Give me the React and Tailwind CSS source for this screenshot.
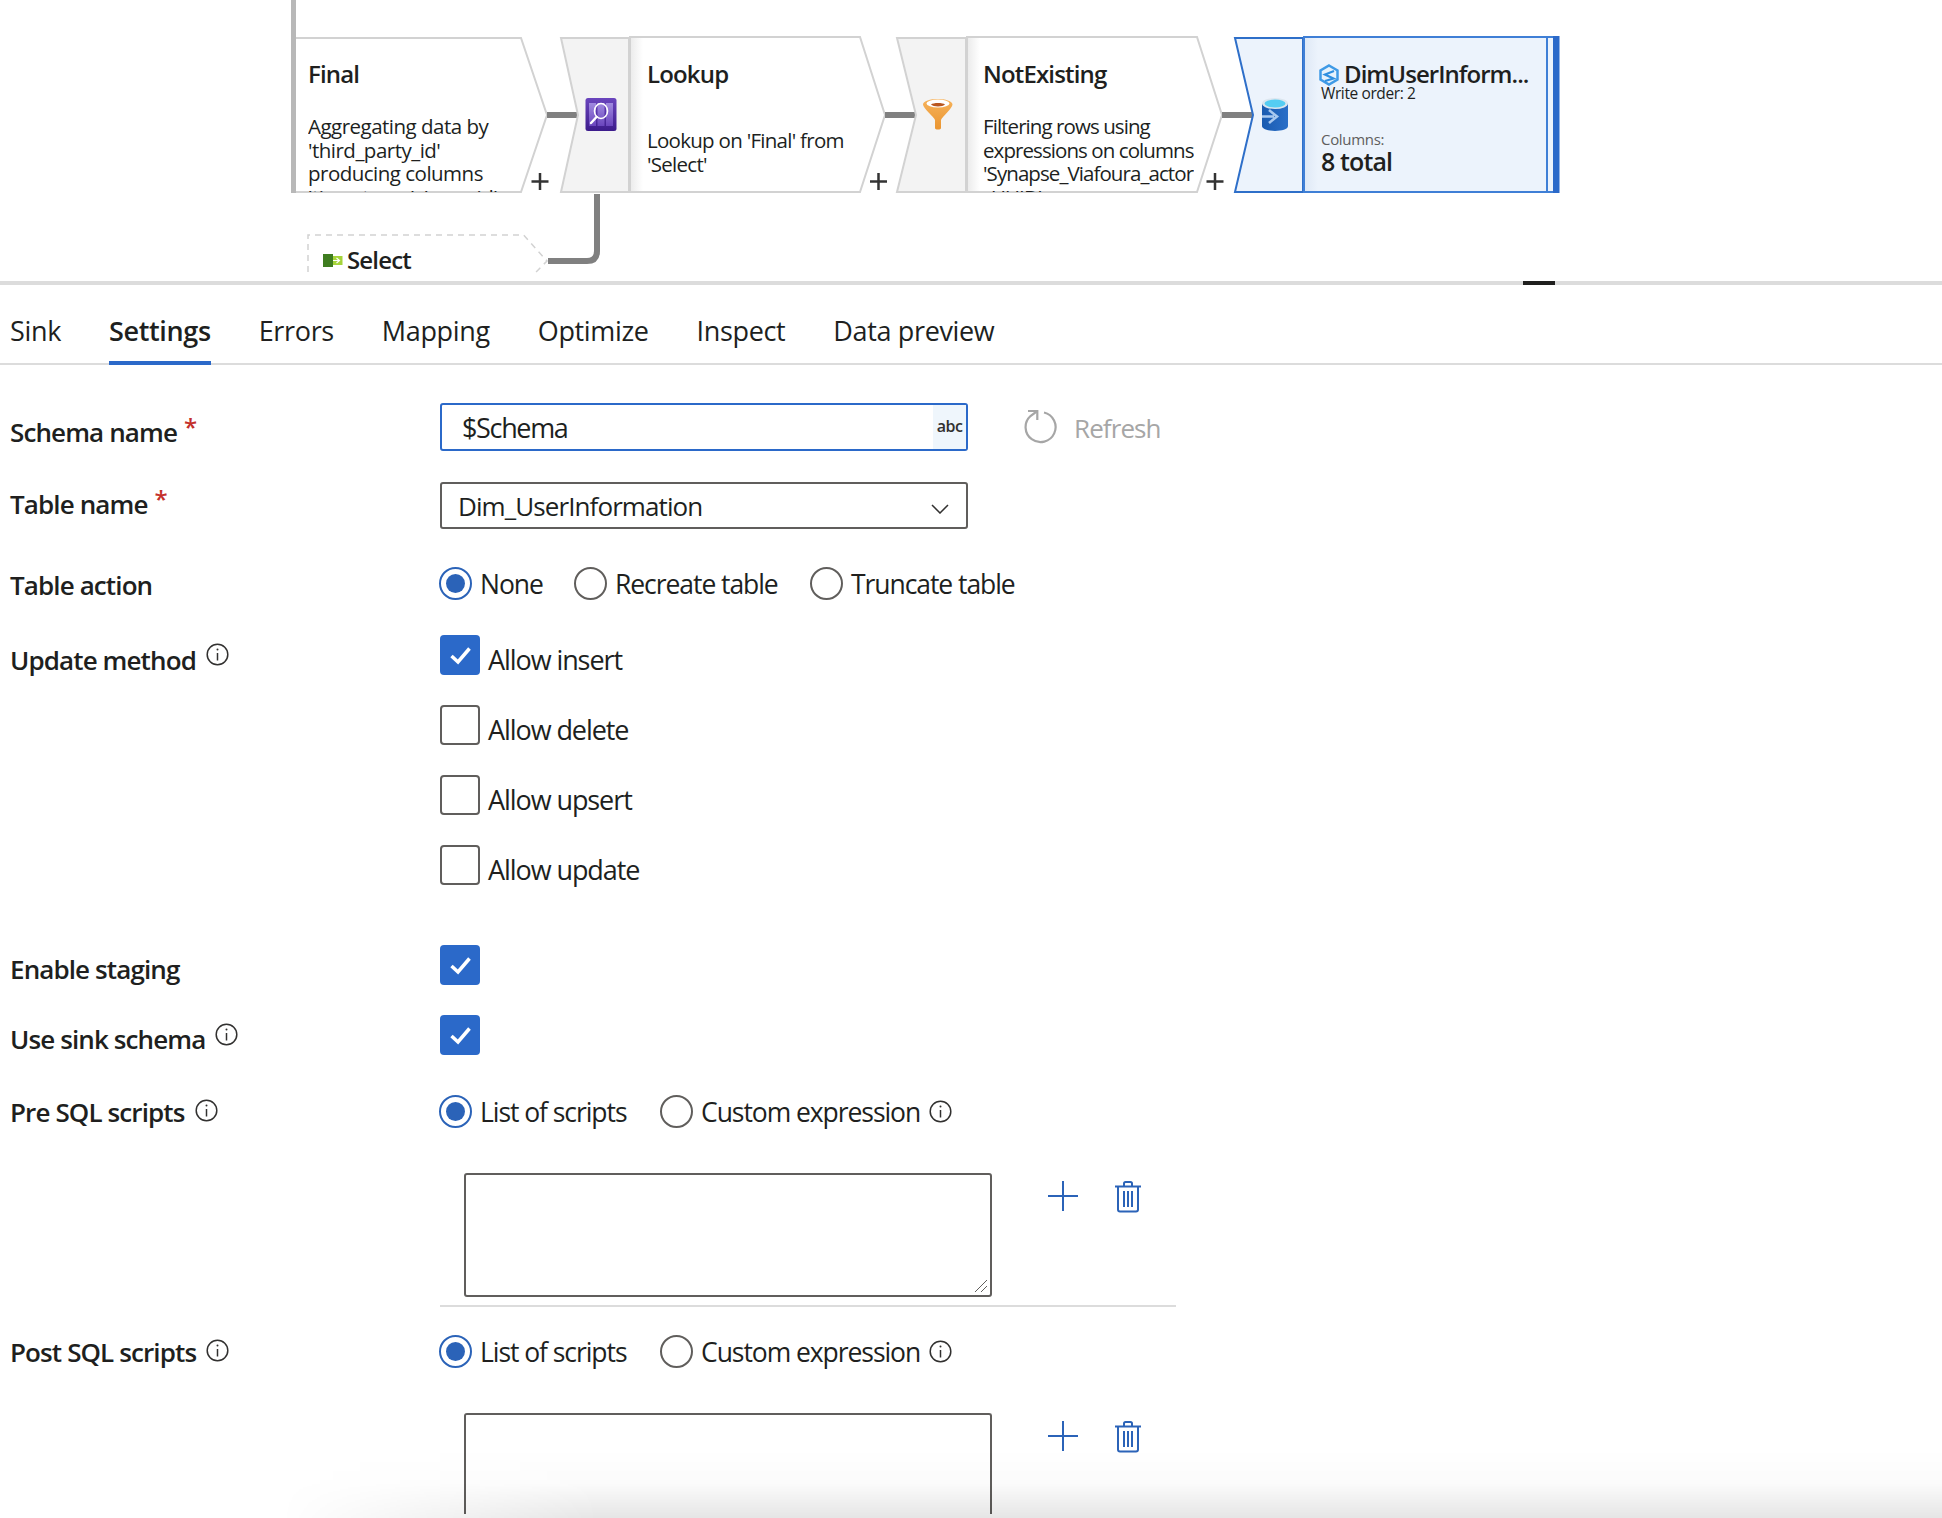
import React from "react";

const tabs = ["Sink", "Settings", "Errors", "Mapping", "Optimize", "Inspect", "Data preview"];

function InfoIcon({ className = "" }) {
  return (
    <svg width="23" height="23" viewBox="0 0 23 23" fill="none" className={`shrink-0 ${className}`}>
      <circle cx="11.5" cy="11.5" r="10.3" stroke="#323130" strokeWidth="1.5" />
      <circle cx="11.5" cy="6.6" r="1" fill="#323130" />
      <path d="M11.5 10v7.5" stroke="#323130" strokeWidth="1.5" />
    </svg>
  );
}

function Check() {
  return (
    <svg width="40" height="40" viewBox="0 0 40 40" fill="none">
      <path d="M11.5 21 L18 27 L29.5 13.5" stroke="#fff" strokeWidth="3.5" />
    </svg>
  );
}

function Checkbox({ checked, label }) {
  return (
    <div className="flex items-start ml-[1px] h-[40px]">
      {checked ? (
        <div className="w-[40px] h-[40px] rounded-[4px] bg-[#2b69c9]">
          <Check />
        </div>
      ) : (
        <div className="w-[40px] h-[40px] rounded-[4px] border-2 border-[#605e5c] bg-white" />
      )}
      {label && <span className="ml-[8px] mt-[9px] text-[27px] leading-[32px] tracking-[-0.04em]">{label}</span>}
    </div>
  );
}

function Radio({ checked, label, className = "", children }) {
  return (
    <div className={`flex items-center ${className}`}>
      <div
        className={`w-[33px] h-[33px] rounded-full border-2 bg-white flex items-center justify-center shrink-0 ${
          checked ? "border-[#2b63b8]" : "border-[#605e5c]"
        }`}
      >
        {checked && <div className="w-[19px] h-[19px] rounded-full bg-[#2b63b8]" />}
      </div>
      <span className="ml-[8px] mt-[2px] text-[26.5px] leading-[32px] tracking-[-0.04em] whitespace-nowrap">{label}</span>
      {children}
    </div>
  );
}

function Label({ text, required, info, offset, className = "" }) {
  return (
    <div className={`w-[439px] pl-[10px] shrink-0 flex items-center ${className}`}>
      <span className="text-[26px] leading-[30px] font-semibold tracking-[-0.034em] whitespace-nowrap">{text}</span>
      {required && <span className="ml-[7px] text-[#c4302b] text-[24px] font-semibold leading-none -translate-y-[2px]">*</span>}
      {info && <InfoIcon className={`ml-[10px] ${offset}`} />}
    </div>
  );
}

function TrashIcon() {
  return (
    <svg width="26" height="32" viewBox="0 0 26 32" fill="none" stroke="#2b63b8" strokeWidth="2">
      <path d="M0 5.5h26" />
      <path d="M9 5V2.5a1.500 1.500 0 0 1 1.500-1.500h5a1.500 1.500 0 0 1 1.500 1.500V5" />
      <path d="M3 5v23.500a2 2 0 0 0 2 2h16a2 2 0 0 0 2-2V5" />
      <path d="M9 10v16M13 10v16M17 10v16" />
    </svg>
  );
}

function ScriptBox({ last }) {
  return (
    <div className="flex items-start ml-[464px]">
      {last ? (
        <div className="w-[528px] h-[101px] border-2 border-b-0 border-[#605e5c] rounded-t-[3px] bg-white" />
      ) : (
        <div className="relative w-[528px] h-[124px] border-2 border-[#605e5c] rounded-[3px] bg-white">
          <svg width="14" height="14" viewBox="0 0 14 14" fill="none" stroke="#605e5c" strokeWidth="1" className="absolute right-[2px] bottom-[2px]">
            <path d="M1 13 L13 1M7 13 L13 7" />
          </svg>
        </div>
      )}
      <svg width="30" height="30" viewBox="0 0 30 30" fill="none" stroke="#2b63b8" strokeWidth="2" className="ml-[56px] mt-[8px]">
        <path d="M15 0v30M0 15h30" />
      </svg>
      <div className="ml-[37px] mt-[8px]">
        <TrashIcon />
      </div>
    </div>
  );
}

function FlowShapes() {
  return (
    <svg width="1942" height="281" viewBox="0 0 1942 281" fill="none" className="absolute inset-0">
      <defs>
        <linearGradient id="fade" x1="0" x2="1" y1="0" y2="0">
          <stop offset="0" stopColor="#ececec" />
          <stop offset="1" stopColor="#ffffff" />
        </linearGradient>
        <linearGradient id="fadeBlue" x1="0" x2="1" y1="0" y2="0">
          <stop offset="0" stopColor="#dfe9f6" />
          <stop offset="1" stopColor="#ecf3fc" />
        </linearGradient>
        <linearGradient id="purple" x1="0" x2="0" y1="0" y2="1">
          <stop offset="0" stopColor="#6a45bd" />
          <stop offset="1" stopColor="#3d1c8c" />
        </linearGradient>
        <linearGradient id="column" x1="0" x2="0" y1="0" y2="1">
          <stop offset="0" stopColor="#a08ae0" />
          <stop offset="1" stopColor="#6a45bd" />
        </linearGradient>
        <linearGradient id="funnel" x1="0" x2="0" y1="0" y2="1">
          <stop offset="0" stopColor="#f6b25a" />
          <stop offset="1" stopColor="#ea9530" />
        </linearGradient>
        <linearGradient id="db" x1="0" x2="1" y1="0" y2="0">
          <stop offset="0" stopColor="#1a5bb0" />
          <stop offset="1" stopColor="#2a6fc8" />
        </linearGradient>
      </defs>

      {/* Final */}
      <rect x="291" y="0" width="5" height="193" fill="#b8b8b8" />
      <path d="M296 38H521L547 115L521 192H296" fill="#fff" stroke="#d2d2d2" strokeWidth="2" />
      <rect x="547" y="112" width="31" height="6" fill="#808080" />

      {/* Lookup */}
      <path d="M561 38H629V192H561L578 115Z" fill="#f3f3f3" stroke="#d2d2d2" strokeWidth="2" />
      <path d="M630 37H860L885 115L860 192H630Z" fill="#fff" stroke="#d2d2d2" strokeWidth="2" />
      <rect x="631" y="38" width="12" height="153" fill="url(#fade)" />
      <rect x="885" y="112" width="30" height="6" fill="#808080" />
      <rect x="585.500" y="98" width="31" height="33" rx="2.500" fill="url(#purple)" />
      <rect x="589" y="103" width="7" height="23" fill="url(#column)" />
      <rect x="597.500" y="103" width="7" height="23" fill="url(#column)" />
      <rect x="606" y="103" width="7" height="23" fill="url(#column)" />
      <ellipse cx="601" cy="111" rx="6.500" ry="7.500" stroke="#fff" strokeWidth="1.600" />
      <path d="M596.500 117L591 123" stroke="#fff" strokeWidth="2.400" strokeLinecap="round" />

      {/* NotExisting */}
      <path d="M897 38H966V192H897L916 115Z" fill="#f3f3f3" stroke="#d2d2d2" strokeWidth="2" />
      <path d="M967 37H1197L1222 115L1197 192H967Z" fill="#fff" stroke="#d2d2d2" strokeWidth="2" />
      <rect x="968" y="38" width="12" height="153" fill="url(#fade)" />
      <rect x="1222" y="112" width="30" height="6" fill="#808080" />
      <path d="M923 104.500C923 97 952.500 97 952.500 104.500C952.500 108 942 117 941 120V128C941 130 935 130 935 128V120C934 117 923 108 923 104.500Z" fill="url(#funnel)" />
      <ellipse cx="938" cy="103.500" rx="11.500" ry="4" fill="#fff" />
      <path d="M931 104.500C933 102.500 943 102.500 945 104.500C943 107 933 107 931 104.500Z" fill="#b9561f" />

      {/* Sink */}
      <path d="M1235 38H1303V192H1235L1253 115Z" fill="#ecf3fc" stroke="#2e6fc9" strokeWidth="2" />
      <rect x="1304" y="37" width="243" height="155" fill="#ecf3fc" stroke="#3f7fd6" strokeWidth="2" />
      <rect x="1305" y="38" width="13" height="153" fill="url(#fadeBlue)" />
      <rect x="1548" y="37" width="5" height="155" fill="#ecf3fc" />
      <path d="M1548 37H1553M1548 192H1553" stroke="#3f7fd6" strokeWidth="2" />
      <rect x="1553" y="36" width="6.500" height="157" fill="#2b69c9" />
      <path d="M1262 103V126C1262 132.500 1288 132.500 1288 126V103Z" fill="url(#db)" />
      <ellipse cx="1275" cy="103.500" rx="13" ry="5.500" fill="#dbe6ef" />
      <ellipse cx="1275" cy="103.500" rx="10.500" ry="4" fill="#55cdf2" />
      <path d="M1262 116.500H1274M1269 110L1277 116.500L1269 123" stroke="#a9c9ef" strokeWidth="2.600" />
      <path d="M1329 65.500L1337.500 70.500V79.500L1329 84.500L1320.500 79.500V70.500Z" fill="#e6f2fc" stroke="#3f9ae6" strokeWidth="2.500" />
      <path d="M1334 71L1325 74.500L1333.500 78.500L1325 81" stroke="#2f8fe0" strokeWidth="2.200" />

      {/* Select */}
      <path d="M308 272V235H523.500L547 261L536 272" fill="#fff" stroke="#d2d2d2" strokeWidth="1.500" strokeDasharray="6 5" />
      <path d="M548 261H587Q597 261 597 251V194" stroke="#808080" strokeWidth="6" />
      <rect x="323" y="254" width="10" height="13" fill="#3f7d20" />
      <rect x="333" y="256" width="9.500" height="9" fill="#a5d43a" />
      <path d="M333 260.500h6M336.500 258l3 2.500l-3 2.500" stroke="#fff" strokeWidth="1.200" />

      {/* add buttons */}
      <path d="M540 173v17M531.500 181.500h17M878.500 173v17M870 181.500h17M1215 173v17M1206.500 181.500h17" stroke="#333" strokeWidth="2.500" />
    </svg>
  );
}

function Node({ className, title, children }) {
  return (
    <div className={`absolute top-[59px] h-[133px] overflow-hidden whitespace-nowrap ${className}`}>
      <div className="text-[24px] leading-[30px] font-semibold tracking-[-0.035em]">{title}</div>
      {children}
    </div>
  );
}

function FlowCanvas() {
  return (
    <div className="relative h-[281px] overflow-hidden">
      <FlowShapes />
      <Node className="left-[308px]" title="Final">
        <div className="mt-[26px] text-[20.5px] leading-[23.500px] tracking-[-0.025em]">
          Aggregating data by
          <br />
          'third_party_id'
          <br />
          producing columns
          <br />
          'timestamp', 'user_id'
        </div>
      </Node>
      <Node className="left-[647px]" title="Lookup">
        <div className="mt-[40px] text-[20.5px] leading-[23.500px] tracking-[-0.035em]">
          Lookup on 'Final' from
          <br />
          'Select'
        </div>
      </Node>
      <Node className="left-[983px]" title="NotExisting">
        <div className="mt-[26px] text-[20.5px] leading-[23.500px] tracking-[-0.045em]">
          Filtering rows using
          <br />
          expressions on columns
          <br />
          'Synapse_Viafoura_actor
          <br />
          _UUID'
        </div>
      </Node>
      <div className="absolute left-[1344px] top-[59px] text-[24px] leading-[30px] font-semibold tracking-[-0.04em] whitespace-nowrap">
        DimUserInform...
      </div>
      <div className="absolute left-[1321px] top-[84px] text-[15.5px] leading-[18px] tracking-[-0.025em] whitespace-nowrap">
        Write order: 2
      </div>
      <div className="absolute left-[1321px] top-[130px] text-[15px] leading-[18px] tracking-[-0.02em] text-[#605e5c]">
        Columns:
      </div>
      <div className="absolute left-[1321px] top-[146px] text-[25px] leading-[30px] font-semibold tracking-[-0.035em] whitespace-nowrap">
        8 total
      </div>
      <div className="absolute left-[347px] top-[245px] text-[24px] leading-[30px] font-semibold tracking-[-0.035em]">
        Select
      </div>
    </div>
  );
}

export default function App() {
  return (
    <div className="relative h-[1518px] w-[1942px] overflow-hidden bg-white text-[#201f1e] font-['Open_Sans','Noto_Sans',sans-serif]">
      <FlowCanvas />

      {/* resize bar */}
      <div className="relative h-[4px] bg-[#dcdcdc]">
        <div className="absolute left-[1523px] top-0 w-[32px] h-[4px] bg-[#201f1e]" />
      </div>

      {/* tabs */}
      <div className="h-[80px] border-b-2 border-[#dcdcdc] flex gap-[48px] pl-[10px]">
        {tabs.map((tab) => (
          <div
            key={tab}
            className={`relative pt-[27px] text-[27px] leading-[38px] tracking-[-0.013em] whitespace-nowrap ${
              tab === "Settings" ? "font-semibold" : ""
            }`}
          >
            {tab}
            {tab === "Settings" && <div className="absolute left-0 right-0 -bottom-[2px] h-[4px] bg-[#2b69c9]" />}
          </div>
        ))}
      </div>

      {/* form */}
      <div className="pt-[38px]">
        <div className="flex h-[48px]">
          <Label text="Schema name" required className="items-start mt-[14px]" />
          <div className="w-[528px] ml-[1px] h-[48px] border-2 border-[#2b69c9] rounded-[3px] flex">
            <div className="flex-1 pl-[20px] text-[27px] leading-[46px] tracking-[-0.05em]">$Schema</div>
            <div className="w-[33px] bg-[#eff6fc] text-[16px] leading-[42px] font-semibold text-center text-[#323130] tracking-[-0.03em]">abc</div>
          </div>
          <svg width="34" height="34" viewBox="0 0 34 34" fill="none" stroke="#a6a6a6" strokeWidth="2.200" className="ml-[56px] mt-[7px]">
            <path d="M20 2.500A15 15 0 1 1 6.500 6L13.300 1" />
            <path d="M4 1H13.300V10" />
          </svg>
          <span className="ml-[16px] mt-[6px] text-[26px] leading-[38px] tracking-[-0.035em] text-[#a6a6a6]">Refresh</span>
        </div>

        <div className="flex h-[47px] mt-[31px]">
          <Label text="Table name" required className="mt-[7px] items-start" />
          <div className="w-[528px] ml-[1px] h-[47px] border-2 border-[#605e5c] rounded-[3px] flex items-center justify-between pl-[16px] pr-[17px]">
            <span className="text-[26px] leading-[44px] tracking-[-0.035em] mt-[1px]">Dim_UserInformation</span>
            <svg width="18" height="10" viewBox="0 0 18 10" fill="none" stroke="#323130" strokeWidth="1.500" className="mt-[7px]">
              <path d="M1 1L9 9L17 1" />
            </svg>
          </div>
        </div>

        <div className="flex h-[34px] mt-[37px]">
          <Label text="Table action" className="mt-[4px] items-start" />
          <div className="flex">
            <Radio checked label="None" className="w-[135px]" />
            <Radio label="Recreate table" className="w-[236px]" />
            <Radio label="Truncate table" />
          </div>
        </div>

        <div className="flex mt-[35px]">
          <Label text="Update method" info offset="-translate-y-[6px]" className="self-start mt-[10px]" />
          <div className="flex flex-col gap-[30px]">
            <Checkbox checked label="Allow insert" />
            <Checkbox label="Allow delete" />
            <Checkbox label="Allow upsert" />
            <Checkbox label="Allow update" />
          </div>
        </div>

        <div className="flex mt-[60px]">
          <Label text="Enable staging" className="self-start mt-[9px]" />
          <Checkbox checked />
        </div>

        <div className="flex mt-[30px]">
          <Label text="Use sink schema" info offset="-translate-y-[5px]" className="self-start mt-[9px]" />
          <Checkbox checked />
        </div>

        <div className="flex h-[34px] mt-[39px]">
          <Label text="Pre SQL scripts" info offset="-translate-y-[2px]" className="self-start mt-[3px]" />
          <div className="flex">
            <Radio checked label="List of scripts" className="w-[221px]" />
            <Radio label="Custom expression">
              <InfoIcon className="ml-[9px]" />
            </Radio>
          </div>
        </div>

        <div className="mt-[45px]">
          <ScriptBox />
        </div>

        <div className="ml-[440px] w-[736px] h-[2px] bg-[#dcdcdc] mt-[8px]" />

        <div className="flex h-[34px] mt-[27px]">
          <Label text="Post SQL scripts" info offset="-translate-y-[2px]" className="self-start mt-[3px]" />
          <div className="flex">
            <Radio checked label="List of scripts" className="w-[221px]" />
            <Radio label="Custom expression">
              <InfoIcon className="ml-[9px]" />
            </Radio>
          </div>
        </div>

        <div className="mt-[45px]">
          <ScriptBox last />
        </div>
      </div>

      {/* screenshot shadow along the bottom edge */}
      <div className="absolute left-[280px] right-0 bottom-0 h-[70px] bg-gradient-to-b from-transparent via-black/[0.015] to-black/10 [mask-image:linear-gradient(to_right,transparent,black_320px)]" />
    </div>
  );
}
